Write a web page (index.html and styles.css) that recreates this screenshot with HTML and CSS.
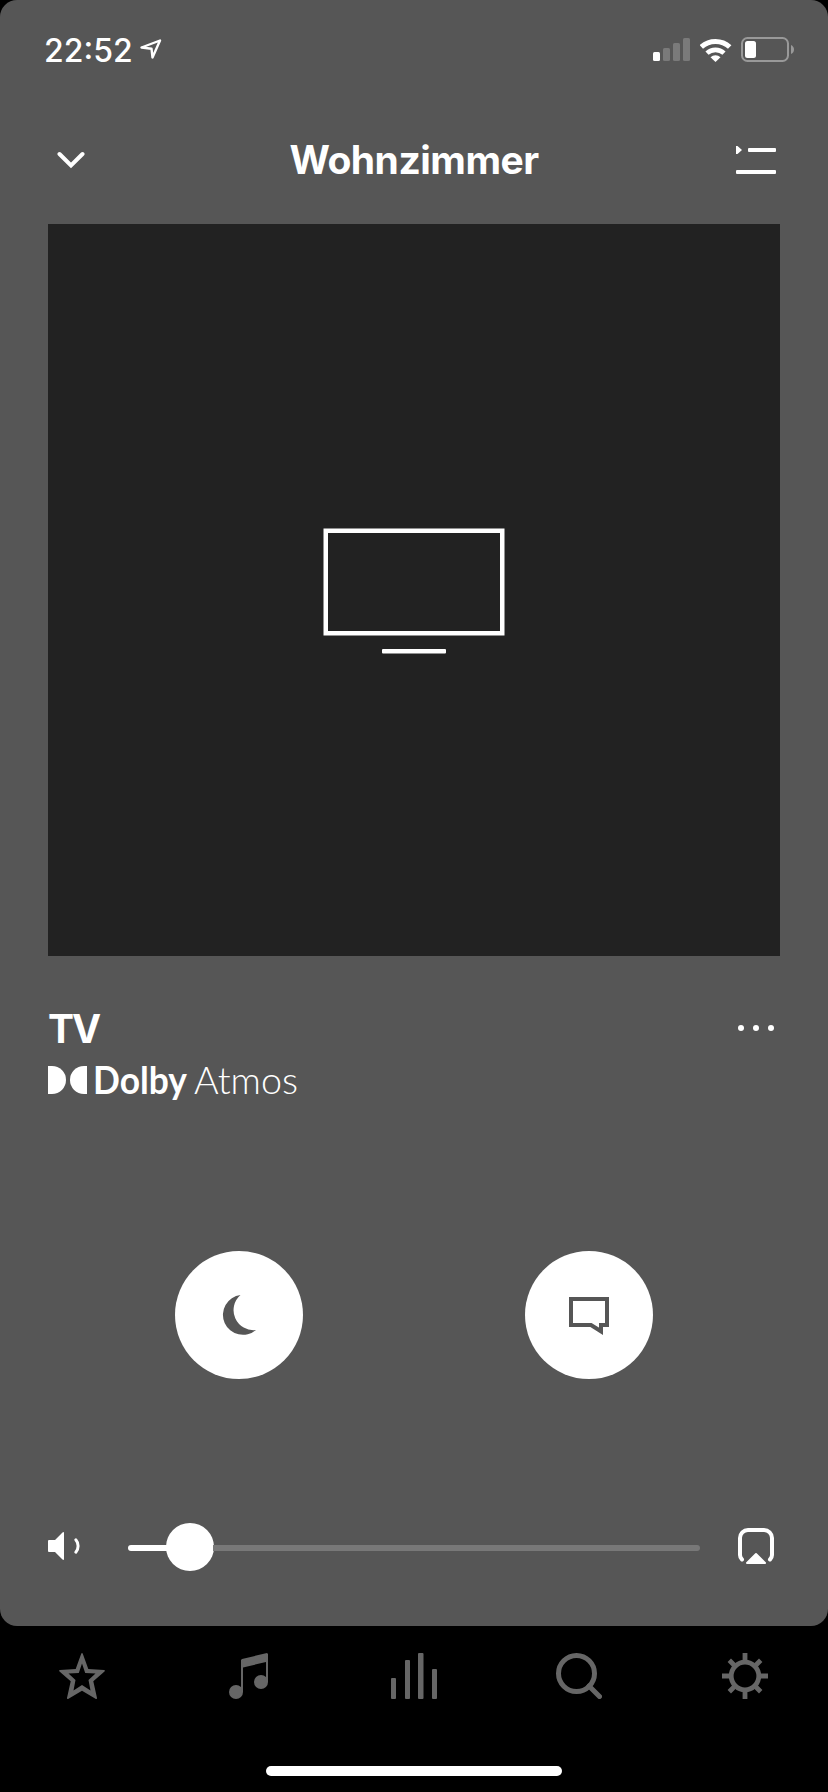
FILE: index.html
```html
<!DOCTYPE html>
<html lang="de">
<head>
    <meta charset="UTF-8">
    <title>Wohnzimmer</title>
    <link rel="stylesheet" href="styles.css">
</head>
<body>
    <main class="player">
        <div class="status-bar">
            <span class="time">22:52</span>
            <svg class="location" width="22" height="21" viewBox="0 0 22 21">
                <path d="M1.5 8.5L20 1.5L12.5 18.5L11.5 9.7Z" fill="none" stroke="#fff" stroke-width="2.4" stroke-linejoin="round"/>
            </svg>
            <div class="indicators">
                <svg width="37" height="23" viewBox="0 0 37 23">
                    <rect x="0" y="14" width="7" height="9" rx="1.5" fill="#fff"/>
                    <rect x="10" y="10" width="7" height="13" rx="1.5" fill="#7a7a7a"/>
                    <rect x="20" y="5" width="7" height="18" rx="1.5" fill="#7a7a7a"/>
                    <rect x="30" y="0" width="7" height="23" rx="1.5" fill="#7a7a7a"/>
                </svg>
                <svg class="wifi" width="32" height="24" viewBox="0 0 32 24">
                    <path d="M1.3 9A20.8 20.8 0 0 1 29.7 9" fill="none" stroke="#fff" stroke-width="5"/>
                    <path d="M7 15.2A12.4 12.4 0 0 1 24 15.2" fill="none" stroke="#fff" stroke-width="4.6"/>
                    <path d="M10.5 19.2A7.4 7.4 0 0 1 20.5 19.2L15.5 24Z" fill="#fff"/>
                </svg>
                <svg class="battery" width="54" height="25" viewBox="0 0 54 25">
                    <rect x="1" y="1" width="46" height="23" rx="5.5" fill="none" stroke="#999" stroke-width="2"/>
                    <rect x="4" y="4" width="11" height="17" rx="2.5" fill="#fff"/>
                    <path d="M50 8Q53 9.5 53 12.5T50 17Z" fill="#999"/>
                </svg>
            </div>
        </div>

        <header class="top-bar">
            <svg width="28" height="18" viewBox="0 0 28 18">
                <path d="M2.5 3L14 14.5L25.5 3" fill="none" stroke="#fff" stroke-width="4" stroke-linecap="round"/>
            </svg>
            <h1>Wohnzimmer</h1>
            <svg width="40" height="30" viewBox="0 0 40 30">
                <path d="M0 1L1.5 1L6 5L1.5 9H0Z" fill="#fff"/>
                <rect x="12" y="3" width="28" height="4" rx="1" fill="#fff"/>
                <rect x="0" y="25" width="40" height="4" rx="1" fill="#fff"/>
            </svg>
        </header>

        <div class="artwork">
            <svg width="182" height="126" viewBox="0 0 182 126">
                <rect x="2.75" y="2.75" width="176.5" height="102.5" fill="none" stroke="#fff" stroke-width="4.5"/>
                <rect x="59" y="121" width="64" height="4.5" rx="1" fill="#fff"/>
            </svg>
        </div>

        <section class="source">
            <div class="source-row">
                <h2>TV</h2>
                <svg width="38" height="8" viewBox="0 0 38 8">
                    <circle cx="4" cy="4" r="3" fill="#fff"/>
                    <circle cx="19" cy="4" r="3" fill="#fff"/>
                    <circle cx="34" cy="4" r="3" fill="#fff"/>
                </svg>
            </div>
            <svg class="dolby" width="256" height="54" viewBox="0 0 256 54">
                <path d="M0 12H4A14 14 0 0 1 4 40H0Z" fill="#fff"/>
                <path d="M39 12H36A14 14 0 0 0 36 40H39Z" fill="#fff"/>
                <text class="dolby-name" x="45" y="40" textLength="94" lengthAdjust="spacingAndGlyphs">Dolby</text>
                <text class="dolby-format" x="146" y="40" textLength="104" lengthAdjust="spacingAndGlyphs">Atmos</text>
            </svg>
        </section>

        <div class="modes">
            <button class="mode" aria-label="Nachtmodus">
                <svg width="40" height="40" viewBox="0 0 40 40">
                    <path d="M20.5 0A20 20 0 1 0 36 35A20 20 0 0 1 20.5 0Z" fill="#565656"/>
                </svg>
            </button>
            <button class="mode" aria-label="Sprachverbesserung">
                <svg width="40" height="38" viewBox="0 0 40 38">
                    <path d="M2 2H38V28H32V34.3L22 28H2Z" fill="none" stroke="#565656" stroke-width="4"/>
                </svg>
            </button>
        </div>

        <div class="volume">
            <svg class="speaker" width="34" height="28" viewBox="0 0 34 28">
                <path d="M1 8H7L14.5 .5Q16 -.5 16 1V27Q16 28.5 14.5 27.5L7 20H1Q0 20 0 19V9Q0 8 1 8Z" fill="#fff"/>
                <path d="M27.8 7.8A9.5 9.5 0 0 1 27.8 20.2" fill="none" stroke="#fff" stroke-width="3" stroke-linecap="round"/>
            </svg>
            <div class="slider">
                <div class="filled"></div>
                <div class="knob"></div>
                <div class="rest"></div>
            </div>
            <svg class="airplay" width="36" height="36" viewBox="0 0 36 36">
                <path d="M4 31.5Q2 29.5 2 27V10A8 8 0 0 1 10 2H26A8 8 0 0 1 34 10V27Q34 29.5 32 31.5" fill="none" stroke="#fff" stroke-width="4" stroke-linecap="round"/>
                <path d="M18 26L27 35H9Z" fill="#fff" stroke="#fff" stroke-width="2" stroke-linejoin="round"/>
            </svg>
        </div>
    </main>

    <nav class="tabs">
        <svg width="46" height="46" viewBox="0 0 46 46">
            <path fill="#666" fill-rule="evenodd" d="M22.3 .5Q23 -.5 23.7 .5L29.3 16L45 17Q46.5 17.5 45.5 18.5L34.3 28.3L38 45Q38 46.5 36.5 45.8L23 37.8L9.5 45.8Q8 46.5 8 45L11.7 28.3L.5 18.5Q-.5 17.5 1 17L16.7 16ZM23 10.5L19.8 20L9.5 20.5L16.5 27L14.5 37.5L23 32L31.5 37.5L29.5 27L36.5 20.5L26.2 20Z"/>
        </svg>
        <svg width="46" height="46" viewBox="0 0 46 46">
            <g fill="#666">
                <circle cx="11" cy="39" r="7"/>
                <circle cx="36" cy="29" r="7"/>
                <path d="M16 7L17 6L42 0L43 1V29H41V9L18 14.5V39H16Z"/>
            </g>
        </svg>
        <svg width="46" height="46" viewBox="0 0 46 46">
            <g fill="#666">
                <rect x="0" y="25" width="5" height="21" rx="1"/>
                <rect x="14" y="7" width="5" height="39" rx="1"/>
                <rect x="27" y="0" width="5.5" height="46" rx="1"/>
                <rect x="41" y="16" width="5" height="30" rx="1"/>
            </g>
        </svg>
        <svg width="46" height="46" viewBox="0 0 46 46">
            <g fill="none" stroke="#666" stroke-width="5">
                <circle cx="20.5" cy="20.5" r="18"/>
                <path d="M33 33L43.5 43.5" stroke-linecap="round"/>
            </g>
        </svg>
        <svg width="46" height="46" viewBox="0 0 46 46">
            <g fill="none" stroke="#666" stroke-width="4.8">
                <circle cx="23" cy="23" r="13.8"/>
                <path d="M23 0V9M23 37V46M0 23H9M37 23H46M7.3 7.3L13 13M33 33L38.7 38.7M38.7 7.3L33 13M13 33L7.3 38.7"/>
            </g>
        </svg>
    </nav>
    <div class="home-indicator"></div>
</body>
</html>
```

FILE: styles.css
```css
* {
    box-sizing: border-box;
}
body {
    margin: 0;
    width: 828px;
    height: 1792px;
    background-color: #000;
    color: #fff;
    font-family: Inter, "Liberation Sans", sans-serif;
    overflow: hidden;
}
svg {
    display: block;
    flex-shrink: 0;
}
.player {
    height: 1626px;
    padding: 0 48px;
    background-color: #565656;
    border-radius: 17px;
}
.status-bar {
    display: flex;
    align-items: center;
    height: 99px;
    margin: 0 -14px 0 -4px;
}
.time {
    width: 88px;
    padding-top: 1px;
    font-size: 32px;
    font-weight: 500;
    white-space: nowrap;
}
.location {
    margin-left: 8px;
}
.indicators {
    display: flex;
    align-items: center;
    margin-left: auto;
}
.wifi {
    margin-left: 10px;
}
.battery {
    margin-left: 9px;
    margin-right: -1px;
}
.top-bar {
    display: flex;
    align-items: center;
    justify-content: space-between;
    height: 125px;
    padding: 0 4px 3px 9px;
}
.top-bar h1 {
    margin: 0;
    padding: 0 0 2px 7px;
    font-size: 39px;
    font-weight: 700;
    letter-spacing: -0.5px;
}
.artwork {
    display: flex;
    align-items: center;
    justify-content: center;
    height: 732px;
    padding-top: 2px;
    background-color: #222;
}
.source {
    padding-top: 47px;
}
.source-row {
    display: flex;
    align-items: center;
    justify-content: space-between;
    height: 50px;
    padding-right: 5px;
}
.source h2 {
    margin: 0;
    font-size: 39px;
    font-weight: 700;
    letter-spacing: -2px;
}
.dolby {
    margin-top: 1px;
    fill: #fff;
    font-family: Lato, sans-serif;
    font-size: 38px;
}
.dolby-name {
    font-weight: 700;
}
.dolby-format {
    font-weight: 300;
}
.modes {
    display: flex;
    justify-content: space-between;
    padding: 143px 127px 0;
}
.mode {
    display: flex;
    align-items: center;
    justify-content: center;
    width: 128px;
    height: 128px;
    padding: 0 0 0 2px;
    border: none;
    border-radius: 50%;
    background-color: #fff;
}
.mode + .mode {
    padding: 2px 0 0;
}
.volume {
    display: flex;
    align-items: center;
    height: 48px;
    margin-top: 144px;
}
.speaker {
    margin-top: -2px;
}
.slider {
    display: flex;
    align-items: center;
    width: 572px;
    margin-left: 46px;
}
.filled,
.rest {
    height: 6px;
    margin-top: 2px;
    background-color: #fff;
    border-radius: 3px 0 0 3px;
}
.filled {
    width: 39px;
}
.knob {
    width: 48px;
    height: 48px;
    border-radius: 50%;
    margin: 0 -1px;
    background-color: #fff;
}
.rest {
    flex: 1;
    background-color: #787878;
    border-radius: 0 3px 3px 0;
}
.airplay {
    margin-left: 38px;
    margin-top: -2px;
}
.tabs {
    display: flex;
    justify-content: space-between;
    padding: 27px 60px 0 59px;
}
.home-indicator {
    width: 296px;
    height: 10px;
    margin: 67px auto 0;
    border-radius: 5px;
    background-color: #fff;
}
```
